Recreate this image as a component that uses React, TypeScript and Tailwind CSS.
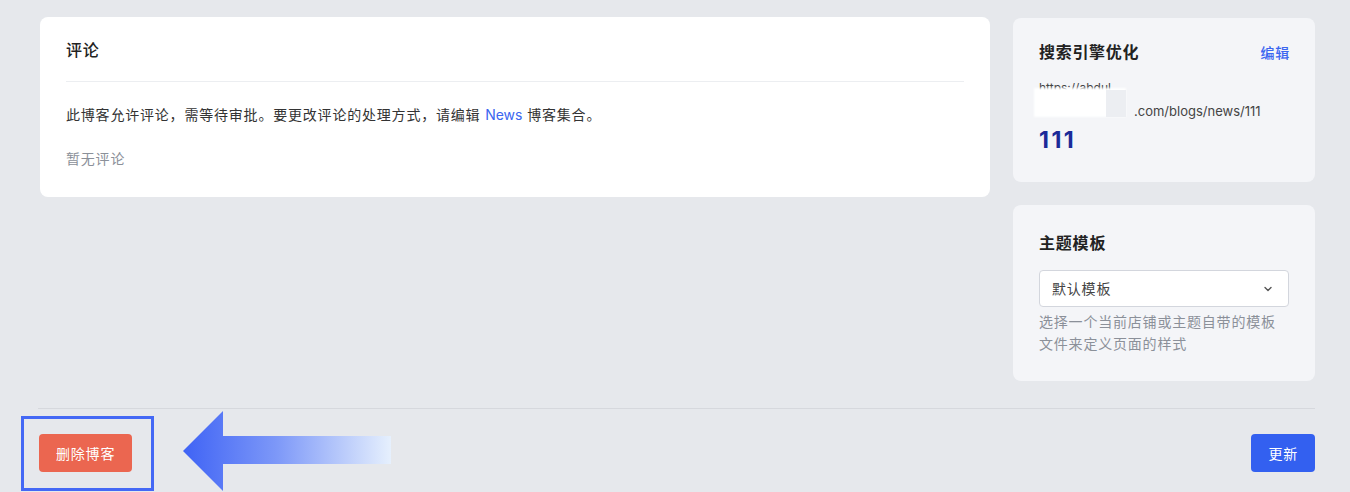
import React from 'react';

const font = { fontFamily: '"Inter", "Noto Sans CJK SC", sans-serif' };

const Arrow = () => (
  <svg width="210" height="82" viewBox="0 0 210 82" className="block">
    <defs>
      <linearGradient id="ag" x1="0" y1="0" x2="1" y2="0">
        <stop offset="0" stopColor="#3f63f5" />
        <stop offset="0.45" stopColor="#7d98f8" />
        <stop offset="1" stopColor="#e6f0fd" />
      </linearGradient>
    </defs>
    <path d="M0 41 L40 1 L40 26 L208 26 L208 54 L40 54 L40 81 Z" fill="url(#ag)" />
  </svg>
);

const App = () => {
  return (
    <div className="w-[1350px] h-[492px] bg-[#e6e8ec] overflow-hidden relative" style={font}>
      <div className="flex gap-[23px] pl-[40px] pt-[17px] h-[408px]">
        <div className="w-[950px] h-[180px] bg-white rounded-lg px-[26px] tracking-[0.8px]">
          <div className="h-[64px] flex items-center pt-[2px] text-[16px] font-medium text-[#222]">评论</div>
          <div className="border-t border-[#eceef1]" />
          <p className="mt-[22px] text-[14px] leading-[22px] text-[#333]">
            此博客允许评论，需等待审批。要更改评论的处理方式，请编辑 <span className="text-[#3b66f0] tracking-normal">News</span> 博客集合。
          </p>
          <p className="mt-[22px] text-[14px] leading-[22px] text-[#8b9099]">暂无评论</p>
        </div>
        <div className="w-[302px] flex flex-col gap-[23px] pt-[1px]">
          <div className="h-[164px] bg-[#f4f5f8] rounded-lg px-[26px] pt-[22px]">
            <div className="flex items-center justify-between h-[24px]">
              <span className="text-[16px] font-semibold text-[#222] tracking-[0.7px]">搜索引擎优化</span>
              <span className="text-[14px] font-medium text-[#3b66f0] tracking-[0.8px] mr-[-1px]">编辑</span>
            </div>
            <div className="relative mt-[16px] h-[46px]">
              <div className="text-[12px] leading-[16px] text-[#444]">https://abdul</div>
              <div className="absolute left-[-5px] top-[8px] w-[92px] h-[29px] bg-white blur-[1px]" />
              <div className="absolute left-[67px] top-[10px] w-[20px] h-[27px] bg-[#eceef2]" />
              <div className="absolute left-[95px] top-[22px] text-[13px] leading-[18px] text-[#444]">.com/blogs/news/111</div>
            </div>
            <div className="text-[23px] leading-[28px] font-bold text-[#1b2a98] tracking-[2.5px]">111</div>
          </div>
          <div className="h-[176px] bg-[#f4f5f8] rounded-lg px-[26px] pt-[26px] tracking-[0.8px]">
            <div className="text-[16px] font-semibold text-[#222] leading-[24px]">主题模板</div>
            <div className="mt-[15px] h-[37px] bg-white border border-[#d3d6dd] rounded-[4px] flex items-center justify-between px-[12px]">
              <span className="text-[14px] text-[#444]">默认模板</span>
              <svg width="12" height="12" viewBox="0 0 12 12" className="mr-[2px]">
                <path d="M3 4.5 L6 7.5 L9 4.5" fill="none" stroke="#555" strokeWidth="1.4" strokeLinecap="round" strokeLinejoin="round" />
              </svg>
            </div>
            <p className="mt-[4px] text-[14px] leading-[22px] text-[#8b9099]">
              选择一个当前店铺或主题自带的模板文件来定义页面的样式
            </p>
          </div>
        </div>
      </div>
      <div className="ml-[38px] w-[1277px] border-t border-[#d6d8dd]" />
      <div className="flex items-start justify-between pl-[39px] w-[1315px] tracking-[0.8px]">
        <div className="flex items-start">
          <button className="mt-[25px] h-[38px] px-[17px] rounded-[4px] bg-[#eb6650] text-white text-[14px]">删除博客</button>
          <div className="ml-[51px] mt-[1px]">
            <Arrow />
          </div>
        </div>
        <button className="mt-[25px] h-[38px] px-[17px] rounded-[4px] bg-[#3360f0] text-white text-[14px]">更新</button>
      </div>
      <div className="absolute left-[21px] top-[416px] w-[133px] h-[75px] border-[3px] border-[#4468f5]" />
    </div>
  );
};

export default App;
